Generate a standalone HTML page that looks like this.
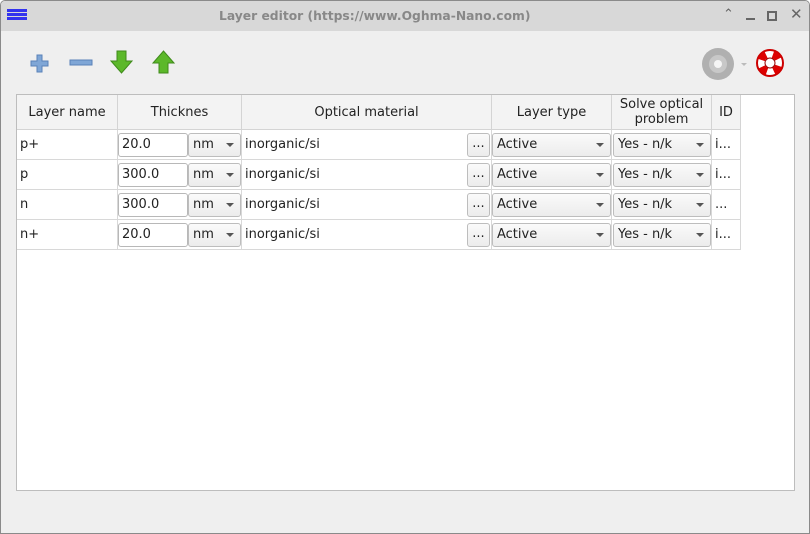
<!DOCTYPE html><html><head><style>
body{margin:0;width:810px;height:534px;overflow:hidden;background:#fff;font-family:"DejaVu Sans","Liberation Sans",sans-serif;font-size:13px;color:#222}
.win{position:absolute;left:0;top:0;width:808px;height:532px;border:1px solid #8a8a8a;border-radius:5px 5px 0 0;background:#efefef;overflow:hidden}
.tb{position:absolute;left:0;top:0;width:808px;height:30px;background:#d8d8d8}
.ttl{position:absolute;left:218px;top:8px;color:#888;font-weight:bold;font-size:12.3px;white-space:nowrap}
.a{position:absolute}
.tab{position:absolute;left:15px;top:93px;width:777px;height:395px;background:#fff;border:1px solid #bdbdbd}
.h{position:absolute;top:0;height:35px;background:#f3f3f3;border-right:1px solid #d4d4d4;border-bottom:1px solid #d4d4d4;text-align:center;box-sizing:border-box;display:flex;align-items:center;justify-content:center;line-height:15px}
.c{position:absolute;height:30px;border-right:1px solid #d8d8d8;border-bottom:1px solid #d8d8d8;box-sizing:border-box;line-height:29px;padding-left:3px}
.in{position:absolute;height:24px;border:1px solid #b8b8b8;border-radius:3px;background:#fff;box-sizing:border-box;line-height:22px;padding-left:3px}
.cb{position:absolute;height:24px;border:1px solid #bdbdbd;border-radius:3px;background:linear-gradient(#fafafa,#ececec);box-sizing:border-box;line-height:22px;padding-left:4px}
.cb:after{content:"";position:absolute;right:6px;top:9px;border:4px solid transparent;border-top:4px solid #555}
.bt{position:absolute;height:24px;width:23px;border:1px solid #bdbdbd;border-radius:3px;background:linear-gradient(#fafafa,#ececec);box-sizing:border-box;text-align:center;line-height:20px}
</style></head><body><div class="win">
<div class="tb"></div>
<div class="a" style="left:6px;top:8px;width:20px;height:3px;background:#3333ee;box-shadow:0 4px 0 #3333ee,0 8px 0 #3333ee"></div>
<div class="ttl">Layer editor (https://www.Oghma-Nano.com)</div>
<div class="a" style="left:722px;top:6px;color:#666;font-size:13px">&#8963;</div>
<div class="a" style="left:745px;top:17px;width:9px;height:2px;background:#666"></div>
<div class="a" style="left:766px;top:10px;width:6px;height:6px;border:2px solid #666"></div>
<div class="a" style="left:789px;top:4px;color:#666;font-size:15px">✕</div>
<svg class="a" style="left:28px;top:52px" width="22" height="22"><path d="M8 2h5v6h6v5h-6v6H8v-6H2V8h6z" fill="#7fa6d6" stroke="#5a82b8"/></svg>
<svg class="a" style="left:68px;top:58px" width="24" height="10"><rect x="1" y="1" width="22" height="5" fill="#7fa6d6" stroke="#5a82b8"/></svg>
<svg class="a" style="left:108px;top:48px" width="26" height="26"><path d="M8 2h9v10h6L12.5 24 2 12h6z" fill="#5cb82a" stroke="#3f8a1b"/></svg>
<svg class="a" style="left:150px;top:48px" width="26" height="26"><path d="M8 24h9V14h6L12.5 2 2 14h6z" fill="#5cb82a" stroke="#3f8a1b"/></svg>
<svg class="a" style="left:700px;top:46px" width="50" height="34"><circle cx="17" cy="17" r="16" fill="#b0b0b0"/><circle cx="17" cy="17" r="9" fill="#c8c8c8"/><circle cx="17" cy="17" r="4" fill="#f5f5f5"/><path d="M40 16h6l-3 3z" fill="#bbb"/></svg>
<svg class="a" style="left:754px;top:47px" width="32" height="32"><circle cx="15" cy="15" r="13" fill="#fff" stroke="#c00" stroke-width="2"/><circle cx="15" cy="15" r="9" fill="none" stroke="#d00" stroke-width="7" stroke-dasharray="7 7" transform="rotate(20 15 15)"/><circle cx="15" cy="15" r="5" fill="#fff" stroke="#900"/></svg>
<div class="tab">
<div class="h" style="left:0;width:101px">Layer name</div>
<div class="h" style="left:101px;width:124px">Thicknes</div>
<div class="h" style="left:225px;width:250px">Optical material</div>
<div class="h" style="left:475px;width:120px">Layer type</div>
<div class="h" style="left:595px;width:100px">Solve optical<br>problem</div>
<div class="h" style="left:695px;width:29px">ID</div>
<div id="rows"></div>
</div></div>
<script>
var d=[["p+","20.0","i..."],["p","300.0","i..."],["n","300.0","..."],["n+","20.0","i..."]],h="";
d.forEach(function(r,i){var t=35+i*30;
h+='<div class="c" style="left:0;top:'+t+'px;width:101px">'+r[0]+'</div>';
h+='<div class="c" style="left:101px;top:'+t+'px;width:124px"></div>';
h+='<div class="in" style="left:101px;top:'+(t+3)+'px;width:70px">'+r[1]+'</div>';
h+='<div class="cb" style="left:171px;top:'+(t+3)+'px;width:53px">nm</div>';
h+='<div class="c" style="left:225px;top:'+t+'px;width:250px">inorganic/si</div>';
h+='<div class="bt" style="left:450px;top:'+(t+3)+'px">...</div>';
h+='<div class="c" style="left:475px;top:'+t+'px;width:120px"></div>';
h+='<div class="cb" style="left:475px;top:'+(t+3)+'px;width:119px">Active</div>';
h+='<div class="c" style="left:595px;top:'+t+'px;width:100px"></div>';
h+='<div class="cb" style="left:596px;top:'+(t+3)+'px;width:98px">Yes - n/k</div>';
h+='<div class="c" style="left:695px;top:'+t+'px;width:29px">'+r[2]+'</div>';});
document.getElementById("rows").innerHTML=h;
</script></body></html>
